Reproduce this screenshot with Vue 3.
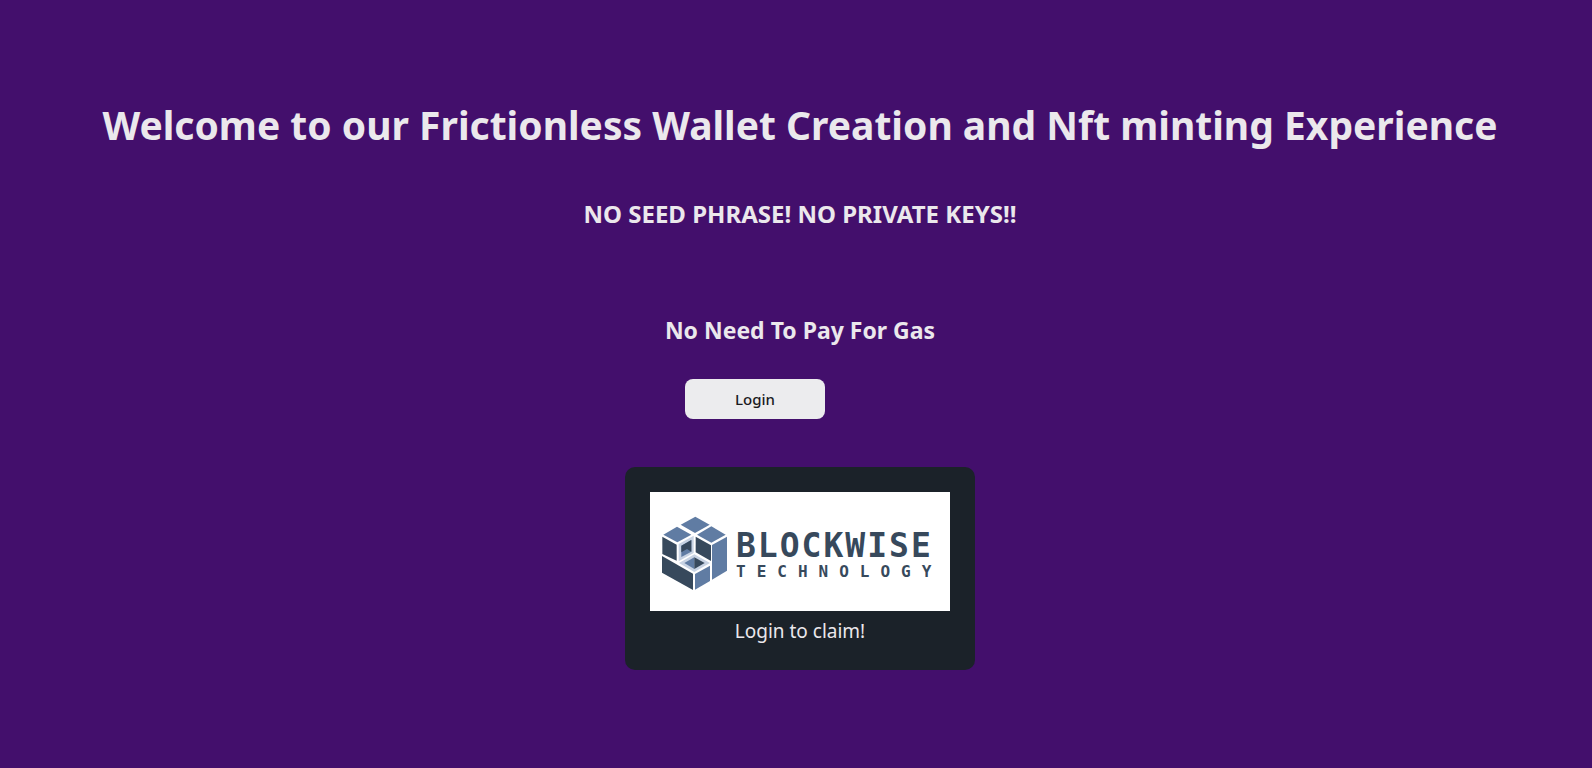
<script setup>
const dark = '#37495c'
const blue = '#607ca3'
const pale = '#c8d3e3'
const faces = [
  { points: '166,110 209,134 165,159 122,134', fill: blue },
  { points: '111,140 154,164 112,187 70,164', fill: blue },
  { points: '214,139 257,164 214,188 171,164', fill: blue },
  { points: '67,170 110,194 110,242 67,222', fill: dark },
  { points: '66,228 159,281 159,330 66,278', fill: dark },
  { points: '165,282 210,257 210,303 165,329', fill: blue },
  { points: '216,195 261,170 261,272 216,299', fill: blue },
  { points: '167,170 213,196 213,243 167,217', fill: dark },
  { points: '116,192 161,167 161,219 116,244', fill: pale },
  { points: '124,197 154,180 154,215 124,231', fill: blue },
  { points: '124,197 154,180 154,215 141,207 124,217', fill: dark },
  { points: '163,223 210,249 163,276 117,249', fill: pale },
  { points: '163,232 163,267 133,249', fill: blue },
  { points: '163,232 194,249 163,267', fill: dark },
]
</script>

<template>
  <main class="page">
    <h1>Welcome to our Frictionless Wallet Creation and Nft minting Experience</h1>
    <h2>NO SEED PHRASE! NO PRIVATE KEYS!!</h2>
    <h3>No Need To Pay For Gas</h3>
    <div class="actions">
      <button type="button">Login</button>
    </div>
    <section class="card">
      <div class="logo">
        <svg class="cube" viewBox="66 108 198 222" aria-hidden="true">
          <polygon v-for="face in faces" :key="face.points" :points="face.points" :fill="face.fill" />
        </svg>
        <div class="wordmark">
          <span class="brand">BLOCKWISE</span>
          <span class="tagline">TECHNOLOGY</span>
        </div>
      </div>
      <p>Login to claim!</p>
    </section>
  </main>
</template>

<style>
body {
  background: #430f6c;
}
</style>

<style scoped>
.page {
  box-sizing: border-box;
  min-height: 100vh;
  padding: 96px 0 96px 8px;
  display: flex;
  flex-direction: column;
  align-items: center;
  background: #430f6c;
  color: #ebe8ec;
  font-family: "Noto Sans", "Open Sans", sans-serif;
  text-align: center;
}

h1,
h2,
h3,
p {
  margin: 0;
}

h1 {
  font-size: 39px;
  line-height: 58px;
}

h2 {
  margin-top: 44px;
  font-size: 24px;
  line-height: 32px;
}

h3 {
  margin-top: 84px;
  font-size: 23px;
  line-height: 32px;
}

.actions {
  width: 230px;
  margin-top: 33px;
  display: flex;
}

button {
  width: 140px;
  height: 40px;
  padding: 0;
  border: 0;
  border-radius: 8px;
  background: #ececee;
  color: #1b1b1f;
  font-family: inherit;
  font-size: 15px;
  font-weight: 500;
  cursor: pointer;
}

.card {
  box-sizing: border-box;
  width: 350px;
  margin-top: 48px;
  padding: 25px;
  border-radius: 10px;
  background: #1b2229;
}

.logo {
  height: 119px;
  display: flex;
  align-items: center;
  gap: 8px;
  padding: 2px 0 0 12px;
  box-sizing: border-box;
  background: #fff;
  color: #37495c;
}

.cube {
  width: 66px;
  height: 74px;
  flex: none;
}

.wordmark {
  display: flex;
  flex-direction: column;
  padding-top: 6px;
  text-align: left;
  font-family: "DejaVu Sans Mono", monospace;
  font-weight: 700;
}

.brand {
  font-size: 33px;
  line-height: 32px;
  letter-spacing: 2px;
}

.tagline {
  font-size: 16px;
  line-height: 20px;
  letter-spacing: 11px;
}

.card p {
  margin-top: 7px;
  font-size: 19px;
  line-height: 27px;
}
</style>
